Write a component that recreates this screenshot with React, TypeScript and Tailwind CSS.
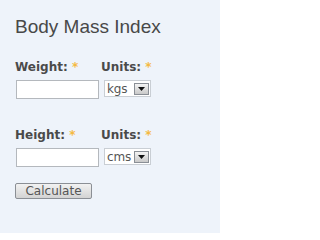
export default function App() {
  const Sel = ({ v }: { v: string }) => (
    <div className="ml-[5px] flex h-[17px] w-[47px] items-center border border-[#c9ced4] bg-white pl-[2px] pr-[1px]">
      <span className="flex-1 text-[12px] leading-none tracking-[-0.2px] text-[#555] [font-family:'DejaVu_Sans',sans-serif]">{v}</span>
      <span className="flex h-[12px] w-[15px] items-center justify-center border border-[#8a8f96] bg-gradient-to-b from-[#f4f4f4] to-[#c9c9c9]">
        <svg width="7" height="4" viewBox="0 0 7 4"><path d="M0 0h7L3.5 4z" fill="#111" /></svg>
      </span>
    </div>
  );
  const Group = ({ label, unit }: { label: string; unit: string }) => (
    <div className="flex flex-col">
      <div className="flex items-start text-[12px] font-bold leading-none text-[#4a4a4a] [font-family:'DejaVu_Sans',sans-serif]">
        <span className="w-[86px]">{label}: <span className="text-[#f5b942]">*</span></span>
        <span>Units: <span className="text-[#f5b942]">*</span></span>
      </div>
      <div className="mt-[7px] ml-[1px] flex items-start">
        <div className="h-[19px] w-[83px] border border-[#b4b8bd] bg-white" />
        <Sel v={unit} />
      </div>
    </div>
  );
  return (
    <div className="h-[233px] w-[220px] bg-[#eef3fa] pl-[15px] pt-[18px] [font-family:'Liberation_Sans',Arial,sans-serif]">
      <div className="text-[19px] leading-[18px] text-[#484848]">Body Mass Index</div>
      <div className="mt-[25px]">
        <Group label="Weight" unit="kgs" />
      </div>
      <div className="mt-[30px]">
        <Group label="Height" unit="cms" />
      </div>
      <button className="mt-[16px] flex h-[16px] w-[77px] items-center justify-center rounded-[2px] border border-[#8b8f95] bg-gradient-to-b from-[#f2f2f2] to-[#d3d3d3] text-[12px] leading-none text-[#555] [font-family:'DejaVu_Sans',sans-serif]">
        Calculate
      </button>
    </div>
  );
}
